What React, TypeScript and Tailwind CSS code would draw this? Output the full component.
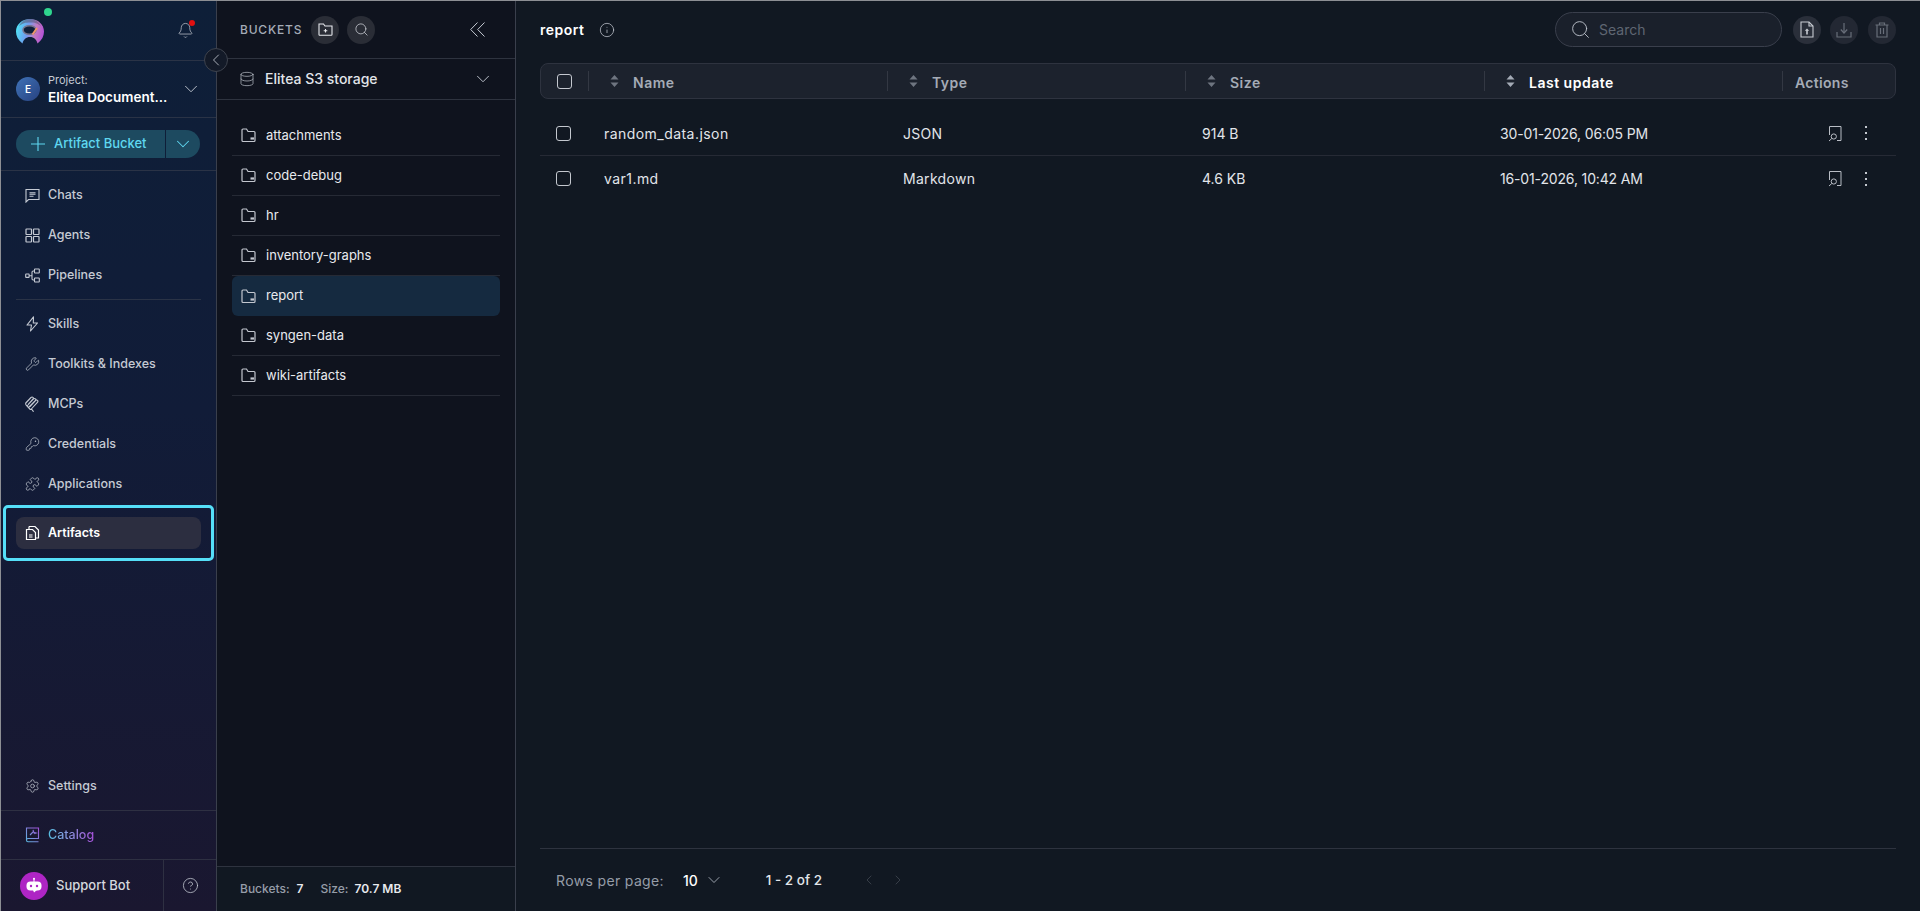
import { ChevronDown, ChevronLeft, ChevronRight, Database, Info, KeyRound, Puzzle, Search, Settings, Wrench, CircleHelp, Bell } from "lucide-react";
import type { ReactNode } from "react";

const Folder = () => (
  <svg width="15" height="15" viewBox="0 0 15 15" fill="none" stroke="#c3c7cf" strokeWidth="1.2" className="shrink-0">
    <path d="M1 12.500V2c0-.5.4-1 1-1h3.500l1.500 2.500h6c.6 0 1 .4 1 1v8c0 .5-.4 1-1 1H2c-.6 0-1-.5-1-1Z" />
    <path d="M9.500 10.500h3.500" strokeWidth="2.200" />
  </svg>
);

const Logo = () => (
  <svg width="30" height="27" viewBox="0 0 30 27" className="shrink-0">
    <defs>
      <linearGradient id="ring" x1="0" y1="0.4" x2="1" y2="0.6">
        <stop offset="0" stopColor="#4fe3f5" />
        <stop offset="0.4" stopColor="#6f9cf0" />
        <stop offset="0.7" stopColor="#c57ac0" />
        <stop offset="1" stopColor="#b14fd8" />
      </linearGradient>
    </defs>
    <path d="M15 1C7 1 1 6.500 1 13.500c0 4.500 2 8.500 6.500 12 1-4 3.500-6.500 7.500-6.500s6.500 2.500 7.500 6.500c4.500-3.500 6.500-7.500 6.500-12C29 6.500 23 1 15 1Z" fill="url(#ring)" />
    <path d="M15 1C9.500 1 5.500 4 4 8.500 7 5 11 4.500 15 4.500s8 .5 11 4C24.500 4 20.500 1 15 1Z" fill="#5c5a78" opacity="0.6" />
    <ellipse cx="14.500" cy="12" rx="6.500" ry="4.300" fill="#10203a" stroke="#77748c" strokeWidth="1.500" />
    <path d="M17.500 16.500 22 10" stroke="#f0956a" strokeWidth="2" />
  </svg>
);

const ChatIcon = () => (
  <svg width="15" height="15" viewBox="0 0 15 15" fill="none" stroke="currentColor" strokeWidth="1.100">
    <path d="M1 14V1.500h13V11.500H3.500Z" />
    <path d="M4.500 4.800h6M4.500 6.300h6M4.500 8.300h4" />
  </svg>
);

const AgentsIcon = () => (
  <svg width="15" height="15" viewBox="0 0 15 15" fill="none" stroke="currentColor" strokeWidth="1.200">
    <rect x="1" y="1" width="5.500" height="5.500" rx="0.500" />
    <rect x="8.500" y="1" width="5.500" height="5.500" rx="0.500" />
    <rect x="1" y="8.500" width="5.500" height="5.500" rx="0.500" />
    <rect x="8.500" y="8.500" width="5.500" height="5.500" rx="0.500" />
  </svg>
);

const PipelineIcon = () => (
  <svg width="15" height="15" viewBox="0 0 15 15" fill="none" stroke="currentColor" strokeWidth="1.100">
    <rect x="0.700" y="6" width="3.400" height="3.400" rx="0.500" />
    <rect x="9.500" y="1" width="4.800" height="4" rx="0.500" />
    <rect x="9.500" y="10" width="4.800" height="4" rx="0.500" />
    <path d="M4 7.700h3M9.500 3H8.200c-.7 0-1.200.5-1.200 1.200v6.600c0 .7.500 1.200 1.200 1.200h1.300" />
  </svg>
);

const BoltIcon = () => (
  <svg width="15" height="16" viewBox="0 0 15 16" fill="none" stroke="currentColor" strokeWidth="1.100" strokeLinejoin="round">
    <path d="M8.500.8 2 9h4.500L5.500 15l7-8H8.300Z" />
  </svg>
);

const McpIcon = () => (
  <svg width="15" height="16" viewBox="0 0 15 16" fill="none" stroke="currentColor" strokeWidth="1.100" strokeLinecap="round">
    <path d="M.8 7 6 1.500c.7-.7 1.500-.7 2 0 .5.500.5 1-.1 1.700L3.500 8M2.500 9.500 8.500 3c.7-.6 1.500-.6 2 0 .5.500.5 1.100 0 1.700L5 10.500M4 11 10.500 4.500c.6-.6 1.500-.7 2-.1.600.600.500 1.400-.1 2L6.800 12.500M.8 7c-.3.800-.1 1.700.6 2.500L4.800 13c.8.700 1.500.500 2-.5M6.500 13l1.800 2.300" />
  </svg>
);

const ArtifactIcon = () => (
  <svg width="15" height="16" viewBox="0 0 15 16" fill="none" stroke="#fff" strokeWidth="1.200">
    <path d="M1.500 4.500h6l3 3v7h-9Z" />
    <path d="M4 1.500h6l3.500 3.500v8h-3M4 1.500v3M4 10h3.500M4 12h3.500" />
  </svg>
);

const CatalogIcon = () => (
  <svg width="15" height="16" viewBox="0 0 15 16" fill="none" strokeWidth="1.100">
    <defs>
      <linearGradient id="cat" x1="0" y1="1" x2="1" y2="0">
        <stop offset="0" stopColor="#5bb8e0" />
        <stop offset="1" stopColor="#a24fd6" />
      </linearGradient>
    </defs>
    <path d="M1.500 13V1h12v10.500H3c-.8 0-1.500.6-1.500 1.500s.7 1.800 1.500 1.800h10.500M5 8l3.500-3.500M8 2.800l.8 2.400 2.400.8-2.400.8" stroke="url(#cat)" />
  </svg>
);

const BotIcon = () => (
  <div className="flex h-7 w-7 shrink-0 items-center justify-center rounded-full bg-[#ae25c4]">
    <svg width="20" height="20" viewBox="0 0 20 20" fill="#fff">
      <circle cx="10" cy="2.800" r="1" />
      <rect x="9.500" y="3" width="1" height="3" />
      <rect x="2.500" y="5.500" width="15" height="9" rx="4" />
      <path d="M9 14h4l-3 2.500Z" />
      <circle cx="7" cy="10" r="1.200" fill="#ae25c4" />
      <circle cx="13" cy="10" r="1.200" fill="#ae25c4" />
    </svg>
  </div>
);

const SortIcon = ({ light }: { light?: boolean }) => (
  <svg width="9" height="14" viewBox="0 0 9 14" className={`shrink-0 ${light ? "text-[#a4abb6]" : "text-[#6e7580]"}`} fill="currentColor">
    <path d="M4.500 1 8.500 5.500H.5ZM4.500 13 .5 8.500h8Z" />
  </svg>
);

const PreviewIcon = () => (
  <svg width="14" height="17" viewBox="0 0 14 17" fill="none" stroke="#b9bdc5" strokeWidth="1" className="shrink-0">
    <path d="M1.500 10V1.500h11.500V15.500H9" />
    <circle cx="5.800" cy="11.500" r="2.600" />
    <path d="M3.800 13.500 1 16" />
  </svg>
);

const UploadIcon = () => (
  <svg width="14" height="17" viewBox="0 0 14 17" fill="none" stroke="#c7cbd2" strokeWidth="1.100">
    <path d="M1 1h8l4 4v11H1Z" />
    <path d="M9 1v4h4" />
    <path d="M7 13.500V9" strokeWidth="1.600" />
    <path d="M4.800 9.800 7 7.600l2.200 2.200Z" fill="#c7cbd2" stroke="none" />
  </svg>
);

const DownloadIcon = () => (
  <svg width="16" height="16" viewBox="0 0 16 16" fill="none" stroke="#686e79" strokeWidth="1.200">
    <path d="M1 10v5h14v-5M8 1v9" />
    <path d="M4.800 7.500 8 11l3.200-3.500" />
  </svg>
);

const TrashIcon = () => (
  <svg width="14" height="16" viewBox="0 0 14 16" fill="none" stroke="#686e79" strokeWidth="1.200">
    <path d="M.5 3h13M4.500 3V1h5v2M2 3v12h10V3M5.500 6v6M8.500 6v6" />
  </svg>
);

const CollapseIcon = () => (
  <svg width="15" height="15" viewBox="0 0 15 15" fill="none" stroke="#c5cad3" strokeWidth="1" className="ml-auto">
    <path d="M7.500.5.700 7.500l6.800 7M14.500.5l-6.800 7 6.800 7" />
  </svg>
);

const Dots = () => (
  <span className="flex w-[2px] flex-col gap-[4px]">
    <span className="h-[2px] w-[2px] bg-[#c4c8cf]" />
    <span className="h-[2px] w-[2px] bg-[#c4c8cf]" />
    <span className="h-[2px] w-[2px] bg-[#c4c8cf]" />
  </span>
);

const NavItem = ({ icon, label }: { icon: ReactNode; label: string }) => (
  <div className="mx-[15px] flex h-10 items-center gap-2 px-[9px] text-[#c5cad3]">
    <span className="flex w-[15px] shrink-0 justify-center">{icon}</span>
    <span className="text-[12.5px] font-medium">{label}</span>
  </div>
);

const buckets = ["attachments", "code-debug", "hr", "inventory-graphs", "report", "syngen-data", "wiki-artifacts"];

const columns = [
  { name: "Name" },
  { name: "Type" },
  { name: "Size" },
  { name: "Last update", active: true },
];

const files = [
  { name: "random_data.json", type: "JSON", size: "914 B", date: "30-01-2026, 06:05 PM" },
  { name: "var1.md", type: "Markdown", size: "4.6 KB", date: "16-01-2026, 10:42 AM" },
];

const Checkbox = () => <span className="block h-[15px] w-[15px] rounded-[3px] border border-[#c4c8cf]" />;

const Sidebar = () => (
  <aside className="relative flex w-[216px] shrink-0 flex-col border-r border-[#3a3f4c] bg-[linear-gradient(180deg,#0e1f38_0%,#111c38_45%,#1a1730_100%)]">
    <div className="relative flex h-[60px] shrink-0 items-center justify-between border-b border-[#2a3346] pl-[14px] pr-[22px]">
      <div className="relative top-[1px]">
        <Logo />
        <span className="absolute left-[29px] top-[-10px] h-2 w-2 rounded-full bg-[#2fd58e]" />
      </div>
      <div className="relative">
        <Bell size={17} strokeWidth={1.2} className="text-[#aab0ba]" />
        <span className="absolute right-[-1px] top-[-2px] h-[6px] w-[6px] rounded-full bg-[#e01010]" />
      </div>
    </div>
    <div className="flex h-[57px] shrink-0 items-center border-b border-[#2a3346] pl-[15px] pr-[14px]">
      <div className="flex h-6 w-6 shrink-0 items-center justify-center rounded-full bg-[linear-gradient(135deg,#3f73b8,#27417f)] text-[10px] font-semibold text-white">E</div>
      <div className="ml-2 min-w-0 flex-1">
        <div className="text-[11px] leading-[15px] text-[#c5cad3]">Project:</div>
        <div className="truncate text-[13.5px] font-semibold leading-[18px] text-white">Elitea Document...</div>
      </div>
      <ChevronDown size={22} strokeWidth={1} className="text-[#c5cad3]" />
    </div>
    <div className="flex h-[53px] shrink-0 items-center border-b border-[#2a3346] px-[15px]">
      <div className="flex h-7 w-[184px] text-[#5fd8f0]">
        <div className="flex w-[149px] items-center gap-[9px] rounded-l-full bg-[#1d4a60] pl-[15px]">
          <svg width="14" height="14" viewBox="0 0 14 14" stroke="currentColor" strokeWidth="1.100"><path d="M7 0v14M0 7h14" /></svg>
          <span className="text-[13px] font-medium">Artifact Bucket</span>
        </div>
        <div className="ml-[1px] flex flex-1 items-center justify-center rounded-r-full bg-[#1d4a60]">
          <ChevronDown size={22} strokeWidth={1.1} />
        </div>
      </div>
    </div>
    <nav className="flex flex-1 flex-col pt-1">
      <NavItem icon={<ChatIcon />} label="Chats" />
      <NavItem icon={<AgentsIcon />} label="Agents" />
      <NavItem icon={<PipelineIcon />} label="Pipelines" />
      <div className="mx-[15px] mb-1 mt-1 h-px bg-[#2a3346]" />
      <NavItem icon={<BoltIcon />} label="Skills" />
      <NavItem icon={<Wrench size={18} strokeWidth={1.1} />} label="Toolkits & Indexes" />
      <NavItem icon={<McpIcon />} label="MCPs" />
      <NavItem icon={<KeyRound size={18} strokeWidth={1.1} />} label="Credentials" />
      <NavItem icon={<Puzzle size={18} strokeWidth={1.1} />} label="Applications" />
      <div className="mx-[2px] mt-[1px] flex h-[56px] items-center rounded-[5px] border-[3px] border-[#55dff8] px-[10px]">
        <div className="flex h-8 w-full items-center gap-2 rounded-lg bg-[#2c2e40] px-[9px] text-white">
          <span className="flex w-[15px] shrink-0 justify-center"><ArtifactIcon /></span>
          <span className="text-[12.5px] font-semibold">Artifacts</span>
        </div>
      </div>
      <div className="flex-1" />
      <div className="pb-1"><NavItem icon={<Settings size={18} strokeWidth={1.1} />} label="Settings" /></div>
    </nav>
    <div className="flex h-[49px] shrink-0 items-center gap-2 border-t border-[#2e3042] px-6">
      <CatalogIcon />
      <span className="bg-linear-to-r from-[#52bfe0] to-[#a24fd6] bg-clip-text text-[12.5px] font-medium text-transparent">Catalog</span>
    </div>
    <div className="flex h-[52px] shrink-0 border-t border-[#2e3042]">
      <div className="flex w-[163px] items-center gap-2 border-r border-[#2e3042] pl-[19px]">
        <BotIcon />
        <span className="text-[13px] font-medium text-[#d5d8de]">Support Bot</span>
      </div>
      <div className="flex flex-1 items-center justify-center">
        <CircleHelp size={17} strokeWidth={1.1} className="text-[#c5cad3]" />
      </div>
    </div>
    <button className="absolute left-[203px] top-[47px] z-10 flex h-6 w-6 items-center justify-center rounded-full border border-[#3e434e] bg-[#131a28] text-[#c5cad3]">
      <ChevronLeft size={20} strokeWidth={1} />
    </button>
  </aside>
);

const BucketPanel = () => (
  <section className="flex w-[299px] shrink-0 flex-col border-r border-[#3a3f4c] bg-[#0f131e]">
    <div className="flex h-[58px] shrink-0 items-center border-b border-[#2e333f] pl-[23px] pr-[30px]">
      <span className="text-[12px] font-medium tracking-[0.8px] text-[#a4abb6]">BUCKETS</span>
      <span className="ml-[9px] flex h-7 w-7 items-center justify-center rounded-full bg-[#2a2d36]">
        <svg width="15" height="13" viewBox="0 0 15 13" fill="none" stroke="#e8eaee" strokeWidth="1.100"><path d="M1 11.500V1h4.500l1.500 2h7v8.500c0 .400-.300.800-.800.800H1.800c-.500 0-.800-.400-.800-.800Z" /><path d="M7.500 6v3.500M5.700 7.700h3.600" /></svg>
      </span>
      <span className="ml-2 flex h-7 w-7 items-center justify-center rounded-full bg-[#2a2d36]">
        <Search size={15} strokeWidth={1.2} className="text-[#d0d3d9]" />
      </span>
      <CollapseIcon />
    </div>
    <div className="flex h-[41px] shrink-0 items-center border-b border-[#2e333f] pl-[22px] pr-[21px]">
      <Database size={16} strokeWidth={1.1} className="text-[#b5bac3]" />
      <span className="ml-[10px] pb-px text-[14px] font-medium text-[#e2e5ea]">Elitea S3 storage</span>
      <ChevronDown size={22} strokeWidth={1} className="ml-auto text-[#c5cad3]" />
    </div>
    <div className="flex-1 px-[15px] pt-4">
      {buckets.map((b) =>
        b === "report" ? (
          <div key={b} className="flex h-10 items-center gap-[10px] rounded-md bg-[#152a40] pl-[9px]">
            <Folder />
            <span className="text-[13px] text-[#e8eaee]">{b}</span>
          </div>
        ) : (
          <div key={b} className="flex h-10 items-center gap-[10px] border-b border-[#262a35] pl-[9px]">
            <Folder />
            <span className="text-[13px] text-[#e8eaee]">{b}</span>
          </div>
        ),
      )}
    </div>
    <div className="flex h-[45px] shrink-0 items-center border-t border-[#2e333f] bg-[#111822] pl-[23px] text-[12px] font-medium">
      <span className="text-[#969da8]">Buckets:</span>
      <span className="ml-[7px] font-semibold text-[#e8eaee]">7</span>
      <span className="ml-[17px] text-[#969da8]">Size:</span>
      <span className="ml-[6px] font-semibold text-[#e8eaee]">70.7 MB</span>
    </div>
  </section>
);

const MainPanel = () => (
  <main className="flex min-w-0 flex-1 flex-col bg-[#111822] pl-6 pr-6">
    <div className="flex h-[57px] shrink-0 items-center">
      <span className="text-[14px] font-semibold tracking-[0.5px] text-white">report</span>
      <Info size={16} strokeWidth={1.1} className="ml-[14px] text-[#c5cad3]" />
      <div className="ml-auto flex h-[35px] w-[227px] items-center gap-[8px] rounded-full border border-[#3a3f4c] bg-[#1a202b] pl-[14px]">
        <Search size={21} strokeWidth={1} className="text-[#c5cad3]" />
        <span className="text-[14px] text-[#5f6672]">Search</span>
      </div>
      <span className="ml-[11px] flex h-7 w-7 items-center justify-center rounded-full bg-[#2a2f3a]"><UploadIcon /></span>
      <span className="ml-[9px] flex h-7 w-7 items-center justify-center rounded-full bg-[#232833]"><DownloadIcon /></span>
      <span className="ml-[10px] flex h-7 w-7 items-center justify-center rounded-full bg-[#232833]"><TrashIcon /></span>
    </div>
    <div className="mt-[5px] grid h-9 shrink-0 grid-cols-[48px_299px_298px_299px_298px_113px] items-center rounded-lg border border-[#2e333f] bg-[#1c222d] text-[14px] font-semibold tracking-[0.5px] text-[#a4abb6]">
      <div className="flex h-5 items-center border-r border-[#333843] pl-4"><Checkbox /></div>
      {columns.map((c) => (
        <div key={c.name} className="flex h-5 items-center gap-[14px] border-r border-[#333843] pl-[21px]">
          <SortIcon light={c.active} />
          <span className={`pt-[2px] ${c.active ? "text-white" : ""}`}>{c.name}</span>
        </div>
      ))}
      <div className="pl-3 pt-[2px] tracking-[0.3px]">Actions</div>
    </div>
    <div className="mt-[12px] flex-1">
      {files.map((f, i) => (
        <div key={f.name} className={`grid h-[45px] grid-cols-[64px_299px_299px_298px_1fr_68px] items-center text-[14px] text-[#e2e5ea] ${i === 0 ? "border-b border-[#262a35]" : ""}`}>
          <div className="pl-4"><Checkbox /></div>
          <span className="tracking-[0.45px]">{f.name}</span>
          <span className="tracking-[0.3px]">{f.type}</span>
          <span>{f.size}</span>
          <span className="tracking-[-0.15px]">{f.date}</span>
          <div className="flex items-center gap-[23px]">
            <PreviewIcon />
            <Dots />
          </div>
        </div>
      ))}
    </div>
    <div className="flex h-[63px] shrink-0 items-center border-t border-[#2e333f] pl-4">
      <span className="text-[14px] tracking-[0.35px] text-[#969da8]">Rows per page:</span>
      <span className="ml-[19px] text-[14px] font-medium text-white">10</span>
      <ChevronDown size={20} strokeWidth={1.1} className="ml-[6px] text-[#a4abb6]" />
      <span className="ml-[42px] text-[13.5px] font-medium text-[#e2e5ea]">1 - 2 of 2</span>
      <ChevronLeft size={16} strokeWidth={1} className="ml-[39px] text-[#4a505b]" />
      <ChevronRight size={16} strokeWidth={1} className="ml-[13px] text-[#4a505b]" />
    </div>
  </main>
);

export default function App() {
  return (
    <div className="flex h-screen w-full overflow-hidden border-l border-t border-[#8d8f94] font-['Inter',sans-serif]">
      <Sidebar />
      <BucketPanel />
      <MainPanel />
    </div>
  );
}
